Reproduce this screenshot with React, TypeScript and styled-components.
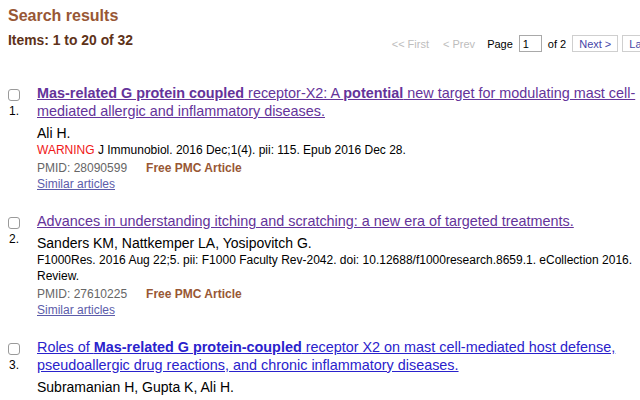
import React from "react";
import styled, { createGlobalStyle } from "styled-components";

const Global = createGlobalStyle`
  html, body { margin: 0; padding: 0; background: #fff; overflow: hidden; }
  body { font-family: "Liberation Sans", Arial, sans-serif; color: #000; }
`;

const Page = styled.div`
  padding: 6px 3px 0 8px;
  width: 640px;
  box-sizing: border-box;
`;

const Heading = styled.h2`
  margin: 0;
  font-size: 16px;
  line-height: 19px;
  font-weight: bold;
  color: #985735;
`;

const CountRow = styled.div`
  display: flex;
  align-items: flex-start;
  margin-top: 7px;
  margin-right: -36px;
`;

const Count = styled.h3`
  margin: 0;
  font-size: 13.9px;
  line-height: 16px;
  font-weight: bold;
  color: #5e3219;
`;

const Pager = styled.div`
  margin-left: auto;
  display: flex;
  align-items: center;
  margin-top: 3px;
  font-size: 11px;
  white-space: nowrap;
`;

const PagerText = styled.span<{ $disabled?: boolean; $gap?: number }>`
  color: ${(p) => (p.$disabled ? "#bdbdbd" : "#000")};
  margin-right: ${(p) => p.$gap ?? 0}px;
`;

const PageInput = styled.input`
  width: 23px;
  height: 17px;
  box-sizing: border-box;
  border: 1px solid #a9a9a9;
  padding: 0 3px;
  margin: 0 6px 0 0;
  font: 11px "Liberation Sans", Arial, sans-serif;
  color: #000;
`;

const PagerButton = styled.span<{ $gap?: number }>`
  display: inline-flex;
  align-items: center;
  height: 17px;
  box-sizing: border-box;
  padding: 0 6px;
  border: 1px solid #cfcfcf;
  color: #4646a8;
  margin-right: ${(p) => p.$gap ?? 0}px;
`;

const List = styled.div`
  margin-top: 32px;
  display: flex;
  flex-direction: column;
  gap: 20px;
`;

const Item = styled.div`
  display: flex;
`;

const Side = styled.div`
  width: 29px;
  flex-shrink: 0;
  display: flex;
  flex-direction: column;
`;

const Check = styled.input`
  appearance: none;
  -webkit-appearance: none;
  width: 12px;
  height: 12px;
  margin: 5px 0 0 0;
  border: 1px solid #9a9a9a;
  border-radius: 3px;
  background: #fff;
  box-sizing: border-box;
`;

const Num = styled.div`
  margin: 2px 0 0 1px;
  font-size: 12px;
  line-height: 16px;
`;

const Body = styled.div`
  flex: 1;
  min-width: 0;
`;

const Title = styled.a<{ $visited?: boolean }>`
  display: block;
  font-size: 14.4px;
  line-height: 18px;
  color: ${(p) => (p.$visited ? "#64339a" : "#2a22cc")};
  text-decoration: underline;
  b { font-weight: bold; }
`;

const Authors = styled.div`
  margin-top: 4px;
  font-size: 14px;
  line-height: 18px;
`;

const Details = styled.div`
  font-size: 12px;
  line-height: 16px;
`;

const Warn = styled.span`
  color: #f01818;
`;

const Meta = styled.div`
  margin-top: 2px;
  font-size: 12px;
  line-height: 16px;
  color: #666;
  display: flex;
  gap: 19px;
`;

const FreePmc = styled.span`
  font-weight: bold;
  color: #985735;
`;

const Similar = styled.a`
  display: block;
  font-size: 12px;
  line-height: 16px;
  color: #5c5caa;
  text-decoration: underline;
`;

type Result = {
  n: number;
  title: React.ReactNode;
  visited: boolean;
  authors: string;
  details?: React.ReactNode;
  pmid?: string;
};

const results: Result[] = [
  {
    n: 1,
    visited: true,
    title: (
      <>
        <b>Mas-related G protein coupled</b> receptor-X2: A <b>potential</b> new target for
        modulating mast cell-mediated allergic and inflammatory diseases.
      </>
    ),
    authors: "Ali H.",
    details: (
      <>
        <Warn>WARNING</Warn> J Immunobiol. 2016 Dec;1(4). pii: 115. Epub 2016 Dec 28.
      </>
    ),
    pmid: "28090599",
  },
  {
    n: 2,
    visited: true,
    title: "Advances in understanding itching and scratching: a new era of targeted treatments.",
    authors: "Sanders KM, Nattkemper LA, Yosipovitch G.",
    details:
      "F1000Res. 2016 Aug 22;5. pii: F1000 Faculty Rev-2042. doi: 10.12688/f1000research.8659.1. eCollection 2016. Review.",
    pmid: "27610225",
  },
  {
    n: 3,
    visited: false,
    title: (
      <>
        Roles of <b>Mas-related G protein-coupled</b> receptor X2 on mast cell-mediated host
        defense, pseudoallergic drug reactions, and chronic inflammatory diseases.
      </>
    ),
    authors: "Subramanian H, Gupta K, Ali H.",
  },
];

export default function App() {
  return (
    <>
      <Global />
      <Page>
        <Heading>Search results</Heading>
        <CountRow>
          <Count>Items: 1 to 20 of 32</Count>
          <Pager>
            <PagerText $disabled $gap={14}>&lt;&lt; First</PagerText>
            <PagerText $disabled $gap={12}>&lt; Prev</PagerText>
            <PagerText $gap={6}>Page</PagerText>
            <PageInput defaultValue="1" />
            <PagerText $gap={6}>of 2</PagerText>
            <PagerButton $gap={4}>Next &gt;</PagerButton>
            <PagerButton>Last &gt;&gt;</PagerButton>
          </Pager>
        </CountRow>
        <List>
          {results.map((r) => (
            <Item key={r.n}>
              <Side>
                <Check type="checkbox" />
                <Num>{r.n}.</Num>
              </Side>
              <Body>
                <Title href="#" $visited={r.visited}>
                  {r.title}
                </Title>
                <Authors>{r.authors}</Authors>
                {r.details && <Details>{r.details}</Details>}
                {r.pmid && (
                  <>
                    <Meta>
                      <span>PMID: {r.pmid}</span>
                      <FreePmc>Free PMC Article</FreePmc>
                    </Meta>
                    <Similar href="#">Similar articles</Similar>
                  </>
                )}
              </Body>
            </Item>
          ))}
        </List>
      </Page>
    </>
  );
}
